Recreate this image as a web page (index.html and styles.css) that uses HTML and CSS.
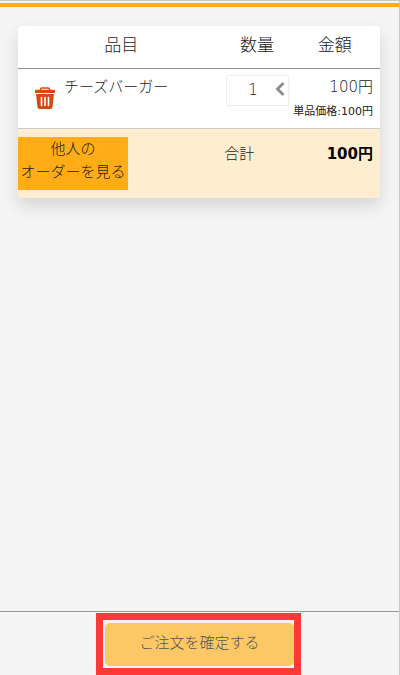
FILE: index.html
```html
<!DOCTYPE html>
<html lang="ja">
<head>
  <meta charset="UTF-8">
  <meta name="viewport" content="width=device-width, initial-scale=1.0">
  <title>ご注文の確認</title>
  <link rel="stylesheet" href="styles.css">
</head>
<body>

<header class="topbar"></header>

<main class="content">
  <table class="order">
    <colgroup>
      <col class="col-item">
      <col class="col-qty">
      <col class="col-price">
    </colgroup>
    <thead>
      <tr>
        <th>品目</th>
        <th>数量</th>
        <th>金額</th>
      </tr>
    </thead>
    <tbody>
      <tr>
        <td>
          <div class="item">
            <button type="button" class="delete" aria-label="削除">
              <svg viewBox="0 0 20 22" width="20" height="22" fill="none" stroke="#d9480f">
                <path d="M5.5 4V2.5Q5.5 1 7 1H13Q14.5 1 14.5 2.5V4" stroke-width="1.5"/>
                <path d="M1 2.8H19Q20 2.8 20 4V6H0V4Q0 2.8 1 2.8Z" fill="#d9480f" stroke="none"/>
                <path d="M1 7H19L17.5 20Q17.2 22 15.5 22H4.5Q2.8 22 2.5 20Z" fill="#d9480f" stroke="none"/>
                <path d="M6.5 10.5V18.5M10 10.5V18.5M13.5 10.5V18.5" stroke="#fff" stroke-width="1.6" stroke-linecap="round"/>
              </svg>
            </button>
            <span class="item-name">チーズバーガー</span>
          </div>
        </td>
        <td>
          <div class="qty">
            <select class="qty-select" aria-label="数量">
              <option selected>1</option>
              <option>2</option>
              <option>3</option>
            </select>
            <svg class="qty-arrow" viewBox="0 0 10 14" width="10" height="14">
              <path d="M8.5 1L2.5 7L8.5 13" fill="none" stroke="#8c8c8c" stroke-width="2.8"/>
            </svg>
          </div>
        </td>
        <td class="price">
          <div>100円</div>
          <div class="unit">単品価格:100円</div>
        </td>
      </tr>
    </tbody>
    <tfoot>
      <tr>
        <td><button type="button" class="others">他人の<br>オーダーを見る</button></td>
        <td class="total-label">合計</td>
        <td class="total">100円</td>
      </tr>
    </tfoot>
  </table>
</main>

<footer class="bottom">
  <div class="highlight">
    <button type="submit" class="confirm">ご注文を確定する</button>
  </div>
</footer>

</body>
</html>
```
FILE: styles.css
```css
* { box-sizing: border-box; }
body {
  margin: 0;
  min-height: 100vh;
  display: flex;
  flex-direction: column;
  background: #f4f4f4;
  border-top: 1px solid #c8c8c8;
  border-right: 1px solid #c8c8c8;
  color: #222;
  font: 300 15px/24px "DejaVu Sans", "Noto Sans CJK JP", sans-serif;
}
button, select { font: inherit; color: inherit; border: 0; padding: 0; }
button { cursor: pointer; }

.topbar { margin-top: 2px; height: 4px; background: #ffad16; }
.content { flex: 1; padding: 19px 19px 19px 18px; }

.order {
  width: 100%;
  table-layout: fixed;
  border-collapse: separate;
  border-spacing: 0;
  background: #fff;
  border-radius: 4px;
  box-shadow: 0 8px 16px rgba(0, 0, 0, .12);
}
.col-item { width: 57%; }
.col-qty { width: 18%; }
.col-price { width: 25%; }
th { height: 43px; padding: 0 0 4px; font-size: 17px; font-weight: 300; border-bottom: 1px solid #8e8e8e; }
td { padding: 0; vertical-align: top; }
tbody td { height: 60px; padding-top: 6px; border-bottom: 1px solid #ccc; }
tfoot td { height: 68px; padding: 8px 0; background: #ffedcf; }
tfoot td:first-child { border-bottom-left-radius: 4px; }
tfoot td:last-child { border-bottom-right-radius: 4px; }

.item { display: flex; gap: 9px; padding-left: 17px; }
.delete { display: flex; margin-top: 12px; background: none; }

.qty { position: relative; width: 63px; margin-left: auto; }
.qty-select {
  display: block;
  width: 100%;
  height: 31px;
  padding: 0 10px 2px 0;
  appearance: none;
  background: #fff;
  border: 1px solid #eee;
  border-radius: 2px;
  text-align: center;
  text-align-last: center;
}
.qty-arrow { position: absolute; top: 7px; right: 4px; pointer-events: none; }

.order .price { padding-right: 7px; text-align: right; }
.unit { font-size: 11px; font-weight: 400; line-height: 26px; white-space: nowrap; }

.others {
  display: block;
  width: 110px;
  height: 53px;
  padding-bottom: 6px;
  background: #ffad16;
  line-height: 23px;
  white-space: nowrap;
}
.order .total-label { padding-top: 13px; }
.order .total { padding: 13px 7px 0 0; text-align: right; font-weight: 700; color: #000; }

.bottom { display: flex; justify-content: center; padding: 1px 2px 0 0; border-top: 1px solid #999; }
.highlight { padding: 3px 0 2px 2px; background: #f4f4f4; border: 7px solid #ff3838; }
.confirm {
  display: block;
  width: 189px;
  height: 43px;
  padding-bottom: 4px;
  background: #fcc865;
  border-radius: 5px;
  color: #555;
}
```
